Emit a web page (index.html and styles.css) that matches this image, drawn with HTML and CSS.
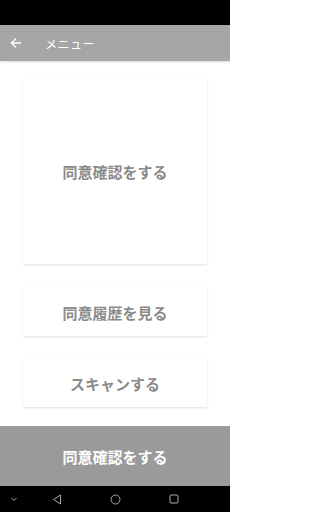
FILE: index.html
```html
<!DOCTYPE html>
<html lang="ja">
<head>
<meta charset="utf-8">
<link rel="stylesheet" href="styles.css">
</head>
<body>
<div class="screen">
  <div class="status"></div>
  <header class="appbar">
    <svg class="back" width="12" height="12" viewBox="0 0 12 12"><path d="M11 6H1.5M6 1.5L1.5 6 6 10.5" fill="none" stroke="#fff" stroke-width="1.4"/></svg>
    <span class="title">メニュー</span>
  </header>
  <main class="content">
    <div class="card big">同意確認をする</div>
    <div class="card small">同意履歴を見る</div>
    <div class="card small">スキャンする</div>
  </main>
  <div class="action">同意確認をする</div>
  <nav class="navbar">
    <svg width="8" height="6" viewBox="0 0 8 6"><path d="M1.5 2l2.5 2.5L6.5 2" fill="none" stroke="#aaa" stroke-width="1"/></svg>
    <svg width="10" height="11" viewBox="0 0 10 11"><path d="M8.5 1L1.5 5.5 8.5 10Z" fill="none" stroke="#aaa" stroke-width="1"/></svg>
    <svg width="11" height="11" viewBox="0 0 11 11"><circle cx="5.5" cy="5.5" r="4.5" fill="none" stroke="#aaa" stroke-width="1"/></svg>
    <svg width="10" height="10" viewBox="0 0 10 10"><rect x="1" y="1" width="8" height="8" rx="1" fill="none" stroke="#aaa" stroke-width="1"/></svg>
  </nav>
</div>
</body>
</html>
```
FILE: styles.css
```css
html, body { margin: 0; padding: 0; }
body { font-family: "Noto Sans CJK JP", "Noto Sans", sans-serif; background: #fff; }
.screen { width: 230px; height: 512px; display: flex; flex-direction: column; overflow: hidden; }
.status { height: 25px; background: #000; flex: none; }
.appbar { height: 36px; background: #a6a6a6; display: flex; align-items: center; flex: none; box-shadow: 0 1px 2px rgba(0,0,0,0.15); position: relative; z-index: 1; }
.back { margin-left: 10px; }
.title { margin-left: 23px; color: #fff; font-size: 12px; font-weight: 400; letter-spacing: 0.5px; }
.content { flex: 1; display: flex; flex-direction: column; align-items: center; padding-top: 18px; gap: 24px; }
.card { width: 184px; background: #fff; box-shadow: 0 1px 2px rgba(0,0,0,0.12); display: flex; align-items: center; justify-content: center; color: #8a8a8a; font-size: 15px; font-weight: 700; }
.big { height: 185px; }
.small { height: 48px; }
.content .small + .small { margin-top: -1px; }
.action { height: 60px; background: #9a9a9a; color: #fff; font-size: 15px; font-weight: 700; display: flex; align-items: center; justify-content: center; flex: none; }
.navbar { height: 26px; background: #000; flex: none; display: flex; align-items: center; padding-left: 10px; }
.navbar svg:nth-child(1) { margin-left: 0; }
.navbar svg:nth-child(2) { margin-left: 34px; }
.navbar svg:nth-child(3) { margin-left: 48px; }
.navbar svg:nth-child(4) { margin-left: 48px; }
```
